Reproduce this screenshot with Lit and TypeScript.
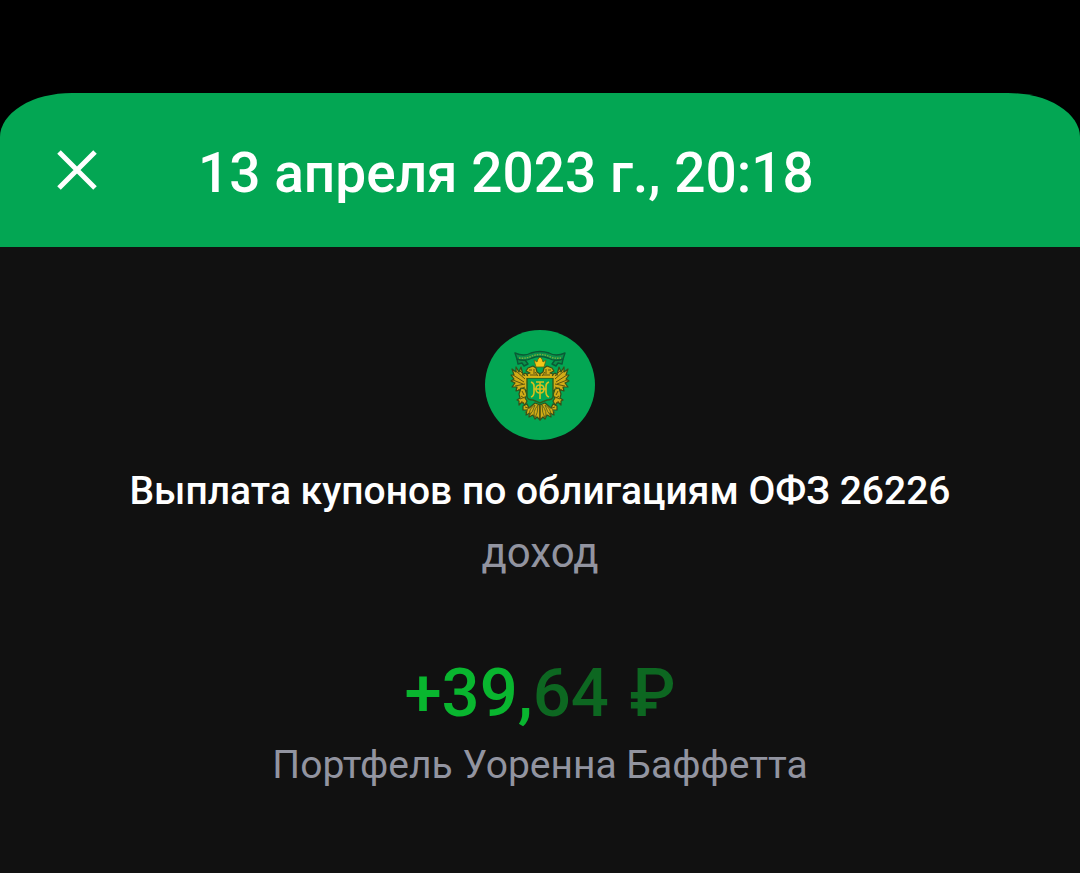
import { LitElement, html, css, svg } from 'lit';
import { customElement, property } from 'lit/decorators.js';

// left half of the eagle, the right one is its mirror
const eagleHalf = svg`
  <path class="gold" d="M43 45 L40 43 L38 45 L36 37 L34 42 L31 37 L31 42 L27 39 L29 45 L26 45 L29 49 L26 51 L30 53 L27 57 L32 57 L31 61 L35 60 L35 65 L39 62 L43 60 Z"/>
  <path class="line" d="M31 41 L40 49 M35 41 L40 46 M28 45 L39 52 M28 50 L38 54 M30 56 L40 54 M33 60 L40 57"/>
  <path class="gold" d="M43 48 L42 44 L45 43 L41 41 L43 38 L48 36 L51 38 L52 42 L55 44 L55 48 Z"/>
  <path class="line" d="M44 40 L47 40 M49 39 L49 44 M45 45 L52 45 M50 42 L53 46"/>
  <path class="gold" d="M36 58 L40 59 L42 65 L40 68 L42 71 L40 75 L37 72 L34 75 L34 71 L32 70 L35 68 L34 64 Z"/>
  <path class="line" d="M37 61 L39 65 M35 69 L40 67 M36 72 L39 73 M36 66 L39 68"/>
  <path class="gold" d="M38 76 L42 74 L44 78 L50 73 L55 75 L55 90 L52 87 L50 89 L48 85 L44 87 L45 83 L41 85 L42 80 L38 80 Z"/>
  <path class="leaf" d="M50 75 Q44 78 44 86 Q48 82 50 75 M53 75 Q47 82 50 88 Q53 83 53 75 M47 76 Q42 78 40 83"/>
  <path class="line" d="M40 77 L43 78"/>
`;

@customElement('bond-logo')
export class BondLogo extends LitElement {
  static styles = css`
    :host {
      display: block;
      width: 110px;
      height: 110px;
    }
    svg {
      display: block;
      width: 100%;
      height: 100%;
    }
    .disc {
      fill: #03a653;
    }
    .gold {
      fill: #d2ac16;
      stroke: #34501a;
      stroke-width: 1.2;
      stroke-linejoin: round;
    }
    .line {
      fill: none;
      stroke: #5c5410;
      stroke-width: 1;
    }
    .leaf {
      fill: none;
      stroke: #59601a;
      stroke-width: 0.9;
    }
    .ribbon {
      fill: #0b9049;
      stroke: #0a5a35;
      stroke-width: 1.4;
      stroke-linejoin: round;
    }
    .motto {
      fill: none;
      stroke: #7fae3a;
      stroke-width: 1.3;
      stroke-dasharray: 1.6 1;
    }
    .shield {
      fill: #03a653;
      stroke: #2f5d1b;
      stroke-width: 1.4;
    }
    .trim {
      fill: none;
      stroke: #d9b416;
      stroke-width: 1.8;
    }
    .monogram {
      fill: none;
      stroke: #d8c11c;
      stroke-width: 1.6;
    }
    .crown {
      fill: #f3c818;
      stroke: #5c6512;
      stroke-width: 0.8;
    }
  `;

  render() {
    return html`
      <svg viewBox="0 0 110 110" role="img" aria-label="ОФЗ">
        <circle class="disc" cx="55" cy="55" r="55"/>
        <path class="ribbon" d="M32 29 L33 34 L37 33 L39 36 L43 34 L40 30 Z M78 29 L77 34 L73 33 L71 36 L67 34 L70 30 Z"/>
        <path class="ribbon" d="M30 23 Q39 27 46 23 Q55 20 64 23 Q71 27 80 23 L78 29 Q70 32 63 28 Q55 25 47 28 Q40 32 32 29 Z"/>
        <path class="motto" d="M34 28 Q41 29 47 26 Q55 23 63 26 Q69 29 76 28"/>
        ${eagleHalf}
        <g transform="matrix(-1 0 0 1 110 0)">${eagleHalf}</g>
        <path class="crown" d="M51 37 L49 30 L52 32 L53 29 L55 27 L57 29 L58 32 L61 30 L59 37 Z"/>
        <path class="shield" d="M42 48 H68 V66 Q68 70 62 70 L55 73 L48 70 Q42 70 42 66 Z"/>
        <path class="trim" d="M41 47 H69"/>
        <path class="monogram" d="M46 52 Q49 53 49 56 V62 Q49 66 46 67 M64 52 Q61 53 61 56 V62 Q61 66 64 67 M49 59 H61 M51 52 H59 M55 52 V69 M55 55 Q51 55 51 59 Q51 63 55 63 Q59 63 59 59 Q59 55 55 55"/>
        <path class="line" d="M55 76 V88"/>
      </svg>
    `;
  }
}

@customElement('app-root')
export class AppRoot extends LitElement {
  @property() date = '13 апреля 2023 г., 20:18';
  @property() operation = 'Выплата купонов по облигациям ОФЗ 26226';
  @property() kind = 'доход';
  @property() whole = '+39,';
  @property() cents = '64';
  @property() portfolio = 'Портфель Уоренна Баффетта';

  static styles = css`
    :host {
      display: flex;
      flex-direction: column;
      box-sizing: border-box;
      min-height: 100vh;
      padding-top: 93px;
      background: #000;
      font-family: Roboto, "Noto Sans", sans-serif;
    }
    header {
      display: flex;
      align-items: flex-start;
      gap: 84px;
      padding: 41px 40px 35px;
      border-radius: 72px 72px 0 0 / 44px 44px 0 0;
      background: #03a653;
      color: #fff;
    }
    .close {
      display: flex;
      padding: 16px;
      border: 0;
      background: none;
      color: inherit;
      cursor: pointer;
    }
    .close svg {
      width: 42px;
      height: 40px;
    }
    .date {
      margin: 0;
      font-size: 55px;
      font-weight: 500;
      line-height: 78px;
    }
    main {
      flex: 1;
      display: flex;
      flex-direction: column;
      align-items: center;
      padding: 83px 40px 40px;
      background: #111;
      text-align: center;
    }
    .operation {
      margin: 27px 0 0;
      color: #fff;
      font-size: 39px;
      font-weight: 500;
      line-height: 48px;
    }
    .note {
      margin: 0;
      color: #9294a0;
      font-size: 39px;
      line-height: 48px;
    }
    .kind {
      margin-top: 14px;
      font-size: 42px;
    }
    .amount {
      margin: 76px 0 8px;
      color: #09b62f;
      font-size: 67px;
      font-weight: 500;
      line-height: 80px;
    }
    .cents {
      color: #0d6721;
    }
    .currency {
      margin-left: 4px;
    }
  `;

  render() {
    return html`
      <header>
        <button class="close" aria-label="Закрыть">
          <svg viewBox="0 0 42 40" fill="none" stroke="currentColor" stroke-width="5">
            <path d="M3 2 L39 38 M39 2 L3 38"/>
          </svg>
        </button>
        <h1 class="date">${this.date}</h1>
      </header>
      <main>
        <bond-logo></bond-logo>
        <h2 class="operation">${this.operation}</h2>
        <p class="note kind">${this.kind}</p>
        <p class="amount">${this.whole}<span class="cents">${this.cents} <span class="currency">₽</span></span></p>
        <p class="note">${this.portfolio}</p>
      </main>
    `;
  }
}
